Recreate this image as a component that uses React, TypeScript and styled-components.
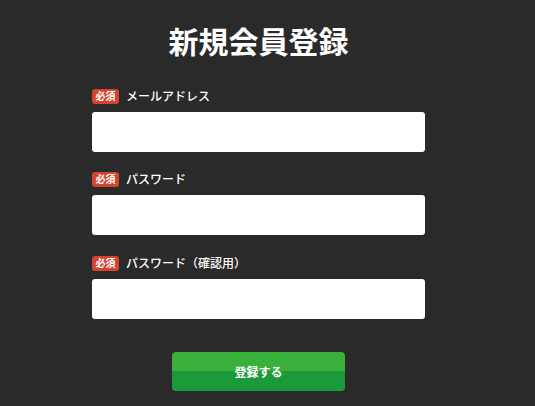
import styled, { createGlobalStyle } from "styled-components";

const GlobalStyle = createGlobalStyle`
  html, body {
    margin: 0;
    padding: 0;
    background: #2a2a2a;
    font-family: "Noto Sans CJK JP", "Noto Sans", sans-serif;
  }
`;

const fields = [
  { id: "email", label: "メールアドレス", type: "email" },
  { id: "password", label: "パスワード", type: "password" },
  { id: "confirm", label: "パスワード（確認用）", type: "password" },
];

const App = () => {
  return (
    <Page>
      <GlobalStyle />
      <Title>新規会員登録</Title>
      <Form onSubmit={(e) => e.preventDefault()}>
        {fields.map((f, i) => (
          <Field key={f.id} last={i === fields.length - 1}>
            <LabelRow htmlFor={f.id}>
              <Badge>必須</Badge>
              <LabelText>{f.label}</LabelText>
            </LabelRow>
            <Input id={f.id} type={f.type} />
          </Field>
        ))}
        <Submit type="submit">登録する</Submit>
      </Form>
    </Page>
  );
};

const Page = styled.div`
  width: 517px;
  display: flex;
  flex-direction: column;
  align-items: center;
`;

const Title = styled.h1`
  margin: 18px 0 0;
  font-size: 30px;
  line-height: 44px;
  font-weight: 700;
  color: #ffffff;
`;

const Form = styled.form`
  width: 333px;
  margin-top: 27px;
  display: flex;
  flex-direction: column;
  gap: 20px;
`;

const Field = styled.div<{ last?: boolean }>`
  display: flex;
  flex-direction: column;
  gap: 9px;
  margin-top: ${({ last }) => (last ? "1px" : "0")};
`;

const LabelRow = styled.label`
  display: flex;
  align-items: center;
  gap: 7px;
  height: 14px;
`;

const Badge = styled.span`
  display: inline-flex;
  align-items: center;
  justify-content: center;
  width: 27px;
  height: 15px;
  border-radius: 3px;
  background: #d4432d;
  color: #ffffff;
  font-size: 10px;
  font-weight: 700;
  line-height: 1;
`;

const LabelText = styled.span`
  color: #ffffff;
  font-size: 12px;
  font-weight: 500;
  line-height: 1;
`;

const Input = styled.input`
  box-sizing: border-box;
  width: 100%;
  height: 40px;
  border: none;
  border-radius: 3px;
  background: #ffffff;
  padding: 0 10px;
  font-size: 14px;
  outline: none;
`;

const Submit = styled.button`
  align-self: center;
  margin-top: 13px;
  width: 173px;
  height: 39px;
  border: none;
  border-radius: 4px;
  background: linear-gradient(to bottom, #38b03a 0 50%, #1a9a3a 50% 100%);
  color: #ffffff;
  font-family: inherit;
  font-size: 12px;
  font-weight: 700;
  cursor: pointer;
`;

export default App;
